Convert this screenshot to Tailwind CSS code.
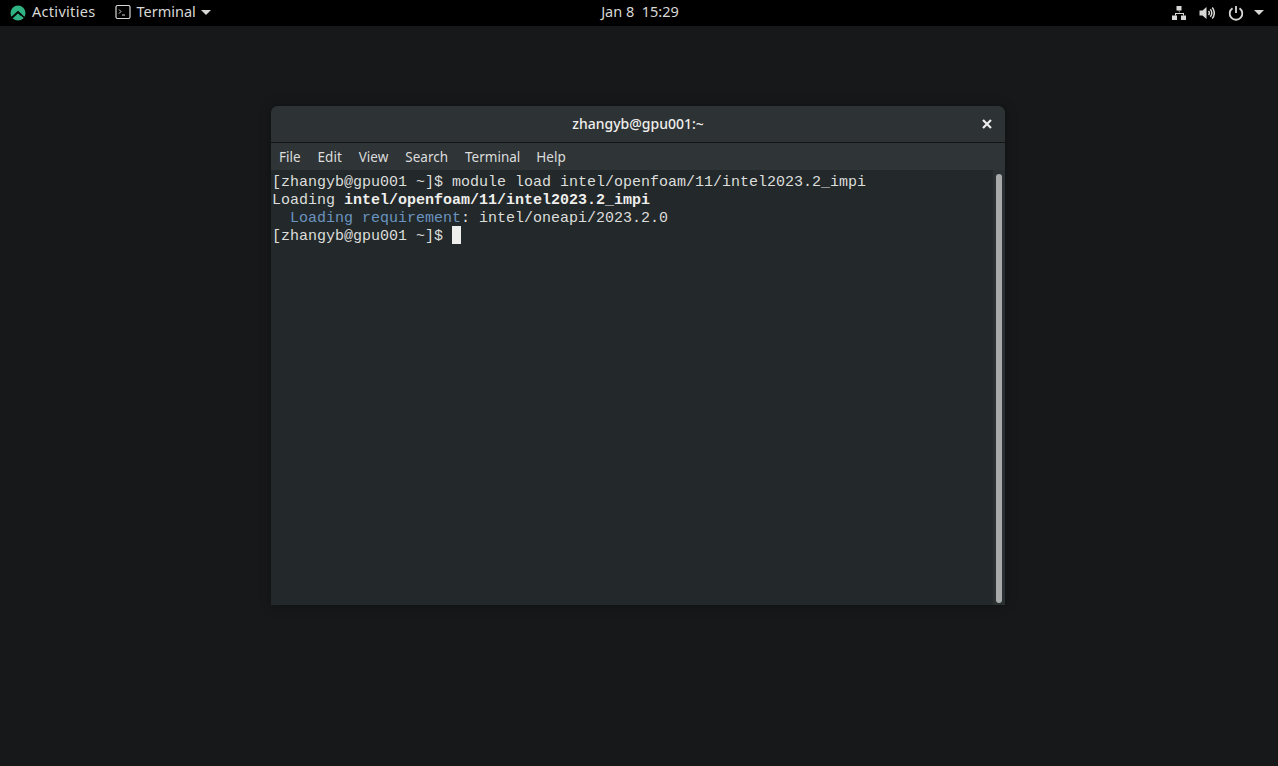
<!DOCTYPE html>
<html>
  <head>
    <meta charset="UTF-8">
    <title>Terminal</title>
    <script src="https://cdn.jsdelivr.net/npm/@tailwindcss/browser@4"></script>
  </head>
  <body class="bg-[#17181a] h-[766px] w-[1278px] overflow-hidden font-['Noto_Sans',sans-serif]">
    <!-- top bar -->
    <header class="h-[26px] pb-[2px] bg-black text-[#d8d8d6] text-[14.5px] grid grid-cols-[1fr_auto_1fr] items-center">
      <div class="flex items-center">
        <svg class="ml-[10px] mt-[2px] w-4 h-4" viewBox="0 0 16 16">
          <circle cx="8" cy="8" r="7.500" fill="#2fb383"/>
          <path d="M1 13.500L8 7l3.500 3.200" fill="none" stroke="#000" stroke-width="2"/>
          <path d="M11.500 10.200L15 13" fill="none" stroke="#000" stroke-width="1.500"/>
        </svg>
        <span class="ml-[6px] tracking-[0.3px]">Activities</span>
        <svg class="ml-[20px] w-4 h-4" viewBox="0 0 16 16" fill="none">
          <rect x="1" y="1.500" width="14" height="13" rx="1.500" stroke="#d8d8d6" stroke-width="1.200"/>
          <path d="M4 5.500l2 2-2 2M7 11h3" stroke="#d8d8d6" stroke-width="1"/>
        </svg>
        <span class="ml-[5px]">Terminal</span>
        <span class="ml-[5px] w-0 h-0 border-x-[5px] border-x-transparent border-t-[5px] border-t-[#d8d8d6]"></span>
      </div>
      <div class="text-center whitespace-pre pl-[2px]">Jan 8  15:29</div>
      <div class="flex items-center justify-end">
        <svg class="w-4 h-4 mt-[2px]" viewBox="0 0 16 16" fill="#d8d8d6">
          <path d="M5.500 1h5v4.500h-5zM1 10.500h5V15H1zM10 10.500h5V15h-5z"/>
          <path d="M7.500 5.500h1V8h4.500v2.500h-1V9h-7v1.500h-1V8h4.500z"/>
        </svg>
        <svg class="ml-[12px] w-4 h-4 mt-[2px]" viewBox="0 0 16 16" fill="none" stroke="#d8d8d6">
          <path fill="#d8d8d6" stroke="none" d="M.5 5.500h3L7.500 2v12l-4-3.500h-3z"/>
          <path stroke-width="1.500" d="M9.500 6a3 3 0 0 1 0 4M11.300 4.200a5.500 5.500 0 0 1 0 7.600M13.200 2.600a8 8 0 0 1 0 10.800"/>
        </svg>
        <svg class="ml-[13px] w-4 h-4 mt-[2px]" viewBox="0 0 16 16" fill="none" stroke="#d8d8d6" stroke-width="1.800">
          <path d="M4.500 3.200a6.300 6.300 0 1 0 7 0M8 1v7"/>
        </svg>
        <span class="ml-[10px] mr-[14px] w-0 h-0 border-x-[5px] border-x-transparent border-t-[5px] border-t-[#d8d8d6]"></span>
      </div>
    </header>

    <!-- terminal window -->
    <div class="ml-[271px] mt-[80px] w-[734px] h-[499px] flex flex-col rounded-t-[7px] bg-[#262b2d] shadow-[0_0_12px_rgba(0,0,0,0.35)] overflow-hidden">
      <div class="h-[37px] pb-[2px] shrink-0 flex items-center justify-center relative bg-[#2d3234] border-b border-[#111314] text-[#eeeeec] text-[14px] font-medium">
        <span>zhangyb@gpu001:~</span>
        <svg class="absolute right-[13px] top-[13px] w-[10px] h-[10px]" viewBox="0 0 10 10" stroke="#eeeeec" stroke-width="2.200">
          <path d="M1 1l8 8M9 1l-8 8"/>
        </svg>
      </div>
      <nav class="h-[27px] pt-[2px] shrink-0 flex items-center gap-[17px] pl-[8px] bg-[#2f3436] text-[#dcdddc] text-[13.5px]">
        <span>File</span><span>Edit</span><span>View</span><span>Search</span><span>Terminal</span><span class="-ml-[1px]">Help</span>
      </nav>
      <div class="flex-1 flex min-h-0 bg-[#23282a]">
        <pre class="flex-1 pl-[1px] pt-[4px] font-['Liberation_Mono',monospace] text-[15px] leading-[18px] text-[#dcdedc]">[zhangyb@gpu001 ~]$ module load intel/openfoam/11/intel2023.2_impi
Loading <b class="text-[#eeeeec]">intel/openfoam/11/intel2023.2_impi</b>
  <span class="text-[#6a94c0]">Loading requirement</span>: intel/oneapi/2023.2.0
[zhangyb@gpu001 ~]$ <span class="inline-block relative -top-[2px] w-[9px] h-[18px] bg-[#eeeeec] align-top"></span></pre>
        <div class="w-[12px] bg-[#2a3032] pt-[4px] pb-[2px] pl-[3px]">
          <div class="h-full w-[6px] rounded-full bg-[#a8aaa9]"></div>
        </div>
      </div>
    </div>
  </body>
</html>
